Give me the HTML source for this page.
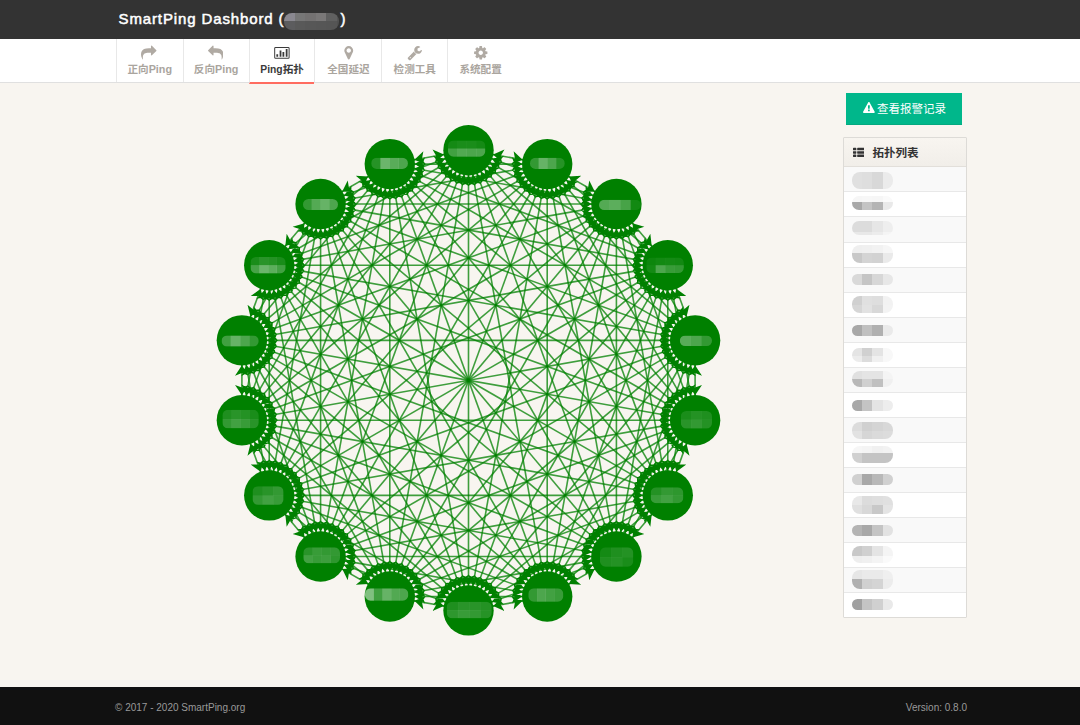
<!DOCTYPE html>
<html lang="zh-CN">
<head>
<meta charset="utf-8">
<title>SmartPing Dashbord</title>
<style>
*{box-sizing:border-box;margin:0;padding:0}
html,body{width:1080px;height:725px;overflow:hidden}
body{background:#f8f5f0;font-family:"Liberation Sans","Noto Sans CJK SC",sans-serif;color:#333;position:relative}
.header{position:absolute;left:0;top:0;width:1080px;height:39px;background:#333}
.header h1{position:absolute;left:118.500px;top:9px;font-size:15px;line-height:20px;font-weight:normal;-webkit-text-stroke:.5px #fff;color:#fff;white-space:nowrap;letter-spacing:.88px}
.header .sp{display:inline-block;width:56px}
.header .mask{position:absolute;left:284px;top:13px;width:55px;height:16.500px;border-radius:8px;overflow:hidden;font-size:0;line-height:0;filter:blur(.3px)}
.header .mask i{display:block;float:left;width:10.600px;height:8.250px}
.header .mask i:nth-child(6n){width:2px}
.nav{position:absolute;left:0;top:39px;width:1080px;height:44px;background:#fff;border-bottom:1px solid #e0e0e0}
.nav .tab{position:absolute;top:0;height:43px;border-left:1px solid #e8e8e8;text-align:center;color:#aaa59e;font-size:10.600px;font-weight:bold}
.nav .tab b{font-size:10.800px}
.nav .tab.active b{font-size:10.300px}
.nav .tab .ic{position:absolute;top:6.300px;width:15.500px;height:15.500px;fill:#b0aaa3}
.nav .tab span{position:absolute;left:0;right:0;top:23px;line-height:14px;white-space:nowrap}
.nav .tab.active{color:#3a3a3a;height:45px;border-bottom:2px solid #ff6c60}
.nav .tab.active .ic{fill:#3a3a3a;width:15.800px;height:15.800px;top:5.900px}
.graph{position:absolute;left:0;top:83px}
.btn{position:absolute;left:846px;top:93px;width:116px;height:32px;background:#00b78b;box-shadow:inset 0 -1px 0 #04a980;color:#fff;font-size:11.500px;line-height:32px;text-align:left;white-space:nowrap;padding-left:31px}
.btn svg{position:absolute;left:17px;top:9.300px;width:11.800px;height:11.800px;fill:#fff}
.panel{position:absolute;left:843px;top:137px;width:124px;height:481px;border:1px solid #dddbd7;border-radius:1px;background:#fff;overflow:hidden}
.panel .hd{height:29px;background:linear-gradient(#f8f5f0,#f1eee9);border-bottom:1px solid #e2dfda;position:relative;font-size:11.500px;font-weight:bold;color:#333}
.panel .hd svg{position:absolute;left:8.600px;top:8.900px;width:11.700px;height:11.700px;fill:#333}
.panel .hd span{position:absolute;left:28.500px;top:8px;line-height:14px}
.panel ul{list-style:none}
.panel li{height:25px;border-bottom:1px solid #e8e8e8;background:#fff;position:relative}
.panel li:nth-child(3){height:26px}
.panel li:nth-child(odd){background:#f9f9f9}
.panel li:last-child{border-bottom:0}
.blur{position:absolute;left:7.700px;width:41.500px;display:block;overflow:hidden;filter:blur(.35px)}
.blur i{position:absolute;display:block;width:10.700px}
.footer{position:absolute;left:0;top:687px;width:1080px;height:38px;background:#111;color:#999;font-size:10px}
.footer .l{position:absolute;left:115px;top:13.700px;line-height:14px}
.footer .r{position:absolute;right:113px;top:13.700px;line-height:14px}
</style>
</head>
<body>
<div class="header"><h1>SmartPing Dashbord (<span class="sp"></span>)</h1><div class="mask"><i style="background:#8a8890"></i><i style="background:#777"></i><i style="background:#747272"></i><i style="background:#7a7878"></i><i style="background:#606060"></i><i style="background:#555"></i><i style="background:#5c5c5e"></i><i style="background:#595959"></i><i style="background:#575757"></i><i style="background:#565656"></i><i style="background:#555"></i><i style="background:#505050"></i></div></div>
<div class="nav">
<div class="tab" style="left:116.0px;width:66.5px"><svg class="ic" viewBox="0 0 1792 1792" style="left:24.0px"><path d="M1792 640q0 26-19 45l-512 512q-19 19-45 19t-45-19-19-45v-256h-224q-98 0-175.500 6t-154 21.500-133 42.500-105.500 69.500-80 101-48.500 138.500-17.500 181q0 55 5 123 0 6 2.500 23.500t2.500 26.500q0 15-8.500 25t-23.500 10q-16 0-28-17-7-9-13-22t-13.500-30-10.500-24q-127-285-127-451 0-199 53-333 162-403 875-403h224v-256q0-26 19-45t45-19 45 19l512 512q19 19 19 45z"/></svg><span>正向<b>Ping</b></span></div>
<div class="tab" style="left:182.5px;width:66.3px"><svg class="ic" viewBox="0 0 1792 1792" style="left:24.2px"><path d="M1792 1120q0 166-127 451-3 7-10.500 24t-13.500 30-13 22q-12 17-28 17-15 0-23.500-10t-8.500-25q0-9 2.500-26.500t2.500-23.500q5-68 5-123 0-101-17.500-181t-48.500-138.500-80-101-105.500-69.500-133-42.500-154-21.500-175.500-6h-224v256q0 26-19 45t-45 19-45-19l-512-512q-19-19-19-45t19-45l512-512q19-19 45-19t45 19 19 45v256h224q713 0 875 403 53 134 53 333z"/></svg><span>反向<b>Ping</b></span></div>
<div class="tab active" style="left:248.8px;width:65.6px"><svg class="ic" viewBox="0 0 16 16" style="left:24.70px"><path d="M1.600 2h12.800a1.400 1.400 0 0 1 1.400 1.400v9.200a1.400 1.400 0 0 1-1.400 1.400H1.600a1.400 1.400 0 0 1-1.400-1.400V3.400A1.400 1.400 0 0 1 1.600 2zm0 1a.4.400 0 0 0-.4.400v9.200c0 .220.180.4.400.4h12.800a.4.400 0 0 0 .4-.4V3.400a.4.400 0 0 0-.4-.4zM2.400 9.300h1.800V12H2.400zM5.700 5.500h1.800V12H5.700zM8.600 7.200h1.800V12H8.600zM11.900 4h1.800v8h-1.800z" fill-rule="evenodd"/></svg><span><b>Ping</b>拓扑</span></div>
<div class="tab" style="left:314.4px;width:67.0px"><svg class="ic" viewBox="0 0 1792 1792" style="left:25.15px"><path d="M1152 640q0-106-75-181t-181-75-181 75-75 181 75 181 181 75 181-75 75-181zm256 0q0 109-33 179l-364 774q-16 33-47.500 52t-67.500 19-67.500-19-46.500-52l-365-774q-33-70-33-179 0-212 150-362t362-150 362 150 150 362z"/></svg><span>全国延迟</span></div>
<div class="tab" style="left:381.4px;width:65.8px"><svg class="ic" viewBox="0 0 1792 1792" style="left:24.65px"><path d="M448 1472q0-26-19-45t-45-19-45 19-19 45 19 45 45 19 45-19 19-45zm644-420l-682 682q-37 37-90 37-52 0-91-37l-106-108q-38-36-38-90 0-53 38-91l681-681q39 98 114.500 173.500t173.500 114.500zm634-435q0 39-23 106-47 134-164.500 217.500t-258.500 83.500q-185 0-316.500-131.500t-131.500-316.500 131.500-316.500 316.500-131.500q58 0 121.500 16.500t107.500 46.500q16 11 16 28t-16 28l-293 169v224l193 107q5-3 79-48.500t135.500-81 70.500-35.500q15 0 23.500 10t8.500 25z"/></svg><span>检测工具</span></div>
<div class="tab" style="left:447.2px;width:65.8px"><svg class="ic" viewBox="0 0 1792 1792" style="left:24.65px"><path d="M1152 896q0-106-75-181t-181-75-181 75-75 181 75 181 181 75 181-75 75-181zm512-109v222q0 12-8 23t-20 13l-185 28q-19 54-39 91 35 50 107 138 10 12 10 25t-9 23q-27 37-99 108t-94 71q-12 0-26-9l-138-108q-44 23-91 38-16 136-29 186-7 28-36 28h-222q-14 0-24.500-8.500t-11.500-21.500l-28-184q-49-16-90-37l-141 107q-10 9-25 9-14 0-25-11-126-114-165-168-7-10-7-23 0-12 8-23 15-21 51-66.500t54-70.500q-27-50-41-99l-183-27q-13-2-21-12.500t-8-23.500v-222q0-12 8-23t19-13l186-28q14-46 39-92-40-57-107-138-10-12-10-24 0-10 9-23 26-36 98.500-107.500t94.500-71.500q13 0 26 10l138 107q44-23 91-38 16-136 29-186 7-28 36-28h222q14 0 24.500 8.500t11.500 21.500l28 184q49 16 90 37l142-107q9-9 24-9 13 0 25 10 129 119 165 170 7 8 7 22 0 12-8 23-15 21-51 66.500t-54 70.500q26 50 41 98l183 28q13 2 21 12.500t8 23.500z"/></svg><span>系统配置</span></div>
</div>
<svg class="graph" width="1080" height="604" viewBox="0 83 1080 604">
<defs><filter id="bl" x="-20%" y="-40%" width="140%" height="180%"><feGaussianBlur stdDeviation="0.35"/></filter></defs>
<g>
<g fill="none" stroke="#008000" stroke-width="1.6" stroke-opacity="0.75"><path d="M686.55 443.75L676.32 471.86"/><path d="M682.6 441.91L628.91 534.92"/><path d="M679.03 439.41L563.27 577.37"/><path d="M675.95 436.33L487.65 594.33"/><path d="M673.45 432.76L411.45 584.02"/><path d="M671.61 428.81L344.09 548.02"/><path d="M670.48 424.6L293.85 491.01"/><path d="M670.1 420.26L266.9 420.26"/><path d="M670.48 415.92L266.52 344.68"/><path d="M671.61 411.71L292.72 273.8"/><path d="M673.45 407.76L342.25 216.53"/><path d="M675.95 404.19L408.95 180.15"/><path d="M679.03 401.11L484.57 169.35"/><path d="M682.6 398.61L559.7 185.73"/><path d="M686.55 396.76L624.96 227.53"/><path d="M690.76 395.64L672.11 289.87"/><path d="M695.1 395.26L695.1 365.34"/><path d="M651.7 514.5L632.48 537.42"/><path d="M648.62 511.42L566.35 580.45"/><path d="M646.12 507.85L490.15 597.9"/><path d="M644.28 503.9L413.29 587.97"/><path d="M643.15 499.69L345.21 552.23"/><path d="M642.77 495.35L294.23 495.35"/><path d="M643.15 491.01L266.52 424.6"/><path d="M644.28 486.8L265.39 348.89"/><path d="M646.12 482.85L290.88 277.75"/><path d="M648.62 479.28L339.75 220.1"/><path d="M651.7 476.2L405.87 183.23"/><path d="M655.27 473.7L481 171.85"/><path d="M659.22 471.86L555.75 187.57"/><path d="M663.43 470.73L620.75 228.65"/><path d="M667.77 470.35L667.77 290.25"/><path d="M672.11 470.73L690.76 364.96"/><path d="M594.75 569.07L568.85 584.02"/><path d="M592.91 565.12L491.99 601.85"/><path d="M591.79 560.91L414.42 592.18"/><path d="M591.41 556.57L345.59 556.57"/><path d="M591.79 552.23L293.85 499.69"/><path d="M592.91 548.02L265.39 428.81"/><path d="M594.75 544.07L263.55 352.84"/><path d="M597.25 540.5L288.38 281.32"/><path d="M600.34 537.42L336.66 223.18"/><path d="M603.91 534.92L402.3 185.73"/><path d="M607.85 533.07L477.05 173.69"/><path d="M612.06 531.95L551.54 188.7"/><path d="M616.41 531.57L616.41 229.03"/><path d="M620.75 531.95L663.43 289.87"/><path d="M624.96 533.07L686.55 363.84"/><path d="M522.58 600.86L493.12 606.06"/><path d="M522.2 596.52L414.8 596.52"/><path d="M522.58 592.18L345.21 560.91"/><path d="M523.71 587.97L292.72 503.9"/><path d="M525.55 584.02L263.55 432.76"/><path d="M528.05 580.45L261.05 356.41"/><path d="M531.13 577.37L285.3 284.4"/><path d="M534.7 574.87L333.09 225.68"/><path d="M538.65 573.03L398.35 187.57"/><path d="M542.86 571.9L472.84 174.82"/><path d="M547.2 571.52L547.2 189.08"/><path d="M551.54 571.9L612.06 228.65"/><path d="M555.75 573.03L659.22 288.74"/><path d="M559.7 574.87L682.6 361.99"/><path d="M443.88 606.06L414.42 600.86"/><path d="M445.01 601.85L344.09 565.12"/><path d="M446.85 597.9L290.88 507.85"/><path d="M449.35 594.33L261.05 436.33"/><path d="M452.43 591.25L257.97 359.49"/><path d="M456 588.75L281.73 286.9"/><path d="M459.95 586.91L329.15 227.53"/><path d="M464.16 585.78L394.14 188.7"/><path d="M468.5 585.4L468.5 175.2"/><path d="M472.84 585.78L542.86 188.7"/><path d="M477.05 586.91L607.85 227.53"/><path d="M481 588.75L655.27 286.9"/><path d="M484.57 591.25L679.03 359.49"/><path d="M368.15 584.02L342.25 569.07"/><path d="M370.65 580.45L288.38 511.42"/><path d="M373.73 577.37L257.97 439.41"/><path d="M377.3 574.87L254.4 361.99"/><path d="M381.25 573.03L277.78 288.74"/><path d="M385.46 571.9L324.94 228.65"/><path d="M389.8 571.52L389.8 189.08"/><path d="M394.14 571.9L464.16 174.82"/><path d="M398.35 573.03L538.65 187.57"/><path d="M402.3 574.87L603.91 225.68"/><path d="M405.87 577.37L651.7 284.4"/><path d="M408.95 580.45L675.95 356.41"/><path d="M304.52 537.42L285.3 514.5"/><path d="M308.09 534.92L254.4 441.91"/><path d="M312.04 533.07L250.45 363.84"/><path d="M316.25 531.95L273.57 289.87"/><path d="M320.59 531.57L320.59 229.03"/><path d="M324.94 531.95L385.46 188.7"/><path d="M329.15 533.07L459.95 173.69"/><path d="M333.09 534.92L534.7 185.73"/><path d="M336.66 537.42L600.34 223.18"/><path d="M339.75 540.5L648.62 281.32"/><path d="M342.25 544.07L673.45 352.84"/><path d="M260.68 471.86L250.45 443.75"/><path d="M264.89 470.73L246.24 364.96"/><path d="M269.23 470.35L269.23 290.25"/><path d="M273.57 470.73L316.25 228.65"/><path d="M277.78 471.86L381.25 187.57"/><path d="M281.73 473.7L456 171.85"/><path d="M285.3 476.2L531.13 183.23"/><path d="M288.38 479.28L597.25 220.1"/><path d="M290.88 482.85L646.12 277.75"/><path d="M292.72 486.8L671.61 348.89"/><path d="M241.9 395.26L241.9 365.34"/><path d="M246.24 395.64L264.89 289.87"/><path d="M250.45 396.76L312.04 227.53"/><path d="M254.4 398.61L377.3 185.73"/><path d="M257.97 401.11L452.43 169.35"/><path d="M261.05 404.19L528.05 180.15"/><path d="M263.55 407.76L594.75 216.53"/><path d="M265.39 411.71L644.28 273.8"/><path d="M266.52 415.92L670.48 344.68"/><path d="M250.45 316.85L260.68 288.74"/><path d="M254.4 318.69L308.09 225.68"/><path d="M257.97 321.19L373.73 183.23"/><path d="M261.05 324.27L449.35 166.27"/><path d="M263.55 327.84L525.55 176.58"/><path d="M265.39 331.79L592.91 212.58"/><path d="M266.52 336L643.15 269.59"/><path d="M266.9 340.34L670.1 340.34"/><path d="M285.3 246.1L304.52 223.18"/><path d="M288.38 249.18L370.65 180.15"/><path d="M290.88 252.75L446.85 162.7"/><path d="M292.72 256.7L523.71 172.63"/><path d="M293.85 260.91L591.79 208.37"/><path d="M294.23 265.25L642.77 265.25"/><path d="M293.85 269.59L670.48 336"/><path d="M342.25 191.53L368.15 176.58"/><path d="M344.09 195.48L445.01 158.75"/><path d="M345.21 199.69L522.58 168.42"/><path d="M345.59 204.03L591.41 204.03"/><path d="M345.21 208.37L643.15 260.91"/><path d="M344.09 212.58L671.61 331.79"/><path d="M414.42 159.74L443.88 154.54"/><path d="M414.8 164.08L522.2 164.08"/><path d="M414.42 168.42L591.79 199.69"/><path d="M413.29 172.63L644.28 256.7"/><path d="M411.45 176.58L673.45 327.84"/><path d="M493.12 154.54L522.58 159.74"/><path d="M491.99 158.75L592.91 195.48"/><path d="M490.15 162.7L646.12 252.75"/><path d="M487.65 166.27L675.95 324.27"/><path d="M568.85 176.58L594.75 191.53"/><path d="M566.35 180.15L648.62 249.18"/><path d="M563.27 183.23L679.03 321.19"/><path d="M632.48 223.18L651.7 246.1"/><path d="M628.91 225.68L682.6 318.69"/><path d="M676.32 288.74L686.55 316.85"/></g>
<path d="M686.55 443.75L676.58 451.08L683.91 451.01L689.48 455.78ZM676.32 471.86L686.3 464.53L678.97 464.6L673.39 459.83ZM682.6 441.91L671.51 447.39L678.74 448.6L683.4 454.26ZM628.91 534.92L640 529.43L632.77 528.23L628.11 522.56ZM679.03 439.41L667.15 442.88L674.07 445.33L677.67 451.71ZM563.27 577.37L575.15 573.9L568.23 571.45L564.63 565.07ZM675.95 436.33L663.65 437.69L670.04 441.29L672.48 448.21ZM487.65 594.33L499.96 592.97L493.57 589.36L491.13 582.45ZM673.45 432.76L661.1 431.96L666.76 436.62L667.97 443.85ZM411.45 584.02L423.81 584.82L418.14 580.16L416.94 572.93ZM671.61 428.81L659.58 425.88L664.35 431.45L664.28 438.78ZM344.09 548.02L356.11 550.95L351.35 545.37L351.42 538.04ZM670.48 424.6L659.15 419.62L662.88 425.94L661.53 433.15ZM293.85 491.01L305.18 495.98L301.46 489.67L302.8 482.46ZM670.1 420.26L659.8 413.39L662.38 420.26L659.8 427.12ZM266.9 420.26L277.2 427.12L274.62 420.26L277.2 413.39ZM670.48 415.92L661.53 407.36L662.88 414.57L659.15 420.89ZM266.52 344.68L275.47 353.24L274.12 346.03L277.85 339.71ZM671.61 411.71L664.28 401.73L664.35 409.06L659.58 414.64ZM292.72 273.8L300.05 283.78L299.98 276.44L304.75 270.87ZM673.45 407.76L667.97 396.66L666.76 403.89L661.1 408.55ZM342.25 216.53L347.73 227.63L348.94 220.4L354.6 215.74ZM675.95 404.19L672.48 392.31L670.04 399.22L663.65 402.83ZM408.95 180.15L412.43 192.03L414.87 185.11L421.26 181.51ZM679.03 401.11L677.67 388.8L674.07 395.19L667.15 397.63ZM484.57 169.35L485.93 181.66L489.54 175.27L496.45 172.83ZM682.6 398.61L683.4 386.25L678.74 391.92L671.51 393.12ZM559.7 185.73L558.9 198.08L563.56 192.42L570.8 191.21ZM686.55 396.76L689.48 384.74L683.91 389.51L676.58 389.43ZM624.96 227.53L622.03 239.55L627.6 234.78L634.93 234.86ZM690.76 395.64L695.74 384.3L689.42 388.03L682.21 386.69ZM672.11 289.87L667.14 301.21L673.46 297.48L680.66 298.82ZM695.1 395.26L701.97 384.96L695.1 387.53L688.24 384.96ZM695.1 365.34L688.24 375.64L695.1 373.07L701.97 375.64ZM651.7 514.5L639.82 517.98L646.74 520.42L650.34 526.81ZM632.48 537.42L644.36 533.94L637.44 531.5L633.84 525.11ZM648.62 511.42L636.32 512.78L642.7 516.39L645.14 523.3ZM566.35 580.45L578.65 579.09L572.27 575.49L569.83 568.57ZM646.12 507.85L633.77 507.05L639.43 511.71L640.64 518.95ZM490.15 597.9L502.5 598.7L496.84 594.04L495.64 586.8ZM644.28 503.9L632.25 500.97L637.02 506.54L636.95 513.88ZM413.29 587.97L425.32 590.9L420.55 585.33L420.62 578ZM643.15 499.69L631.82 494.72L635.54 501.03L634.2 508.24ZM345.21 552.23L356.55 557.2L352.82 550.88L354.17 543.67ZM642.77 495.35L632.47 488.48L635.05 495.35L632.47 502.22ZM294.23 495.35L304.53 502.22L301.95 495.35L304.53 488.48ZM643.15 491.01L634.2 482.46L635.54 489.67L631.82 495.98ZM266.52 424.6L275.47 433.15L274.12 425.94L277.85 419.62ZM644.28 486.8L636.95 476.82L637.02 484.16L632.25 489.73ZM265.39 348.89L272.72 358.87L272.65 351.54L277.42 345.96ZM646.12 482.85L640.64 471.75L639.43 478.99L633.77 483.65ZM290.88 277.75L296.36 288.85L297.57 281.61L303.23 276.95ZM648.62 479.28L645.14 467.4L642.7 474.31L636.32 477.92ZM339.75 220.1L343.22 231.98L345.66 225.07L352.05 221.46ZM651.7 476.2L650.34 463.89L646.74 470.28L639.82 472.72ZM405.87 183.23L407.23 195.53L410.84 189.15L417.75 186.7ZM655.27 473.7L656.07 461.35L651.41 467.01L644.18 468.21ZM481 171.85L480.2 184.2L484.86 178.54L492.1 177.34ZM659.22 471.86L662.15 459.83L656.58 464.6L649.25 464.53ZM555.75 187.57L552.82 199.6L558.39 194.83L565.72 194.9ZM663.43 470.73L668.41 459.39L662.09 463.12L654.88 461.78ZM620.75 228.65L615.77 239.99L622.09 236.26L629.3 237.6ZM667.77 470.35L674.64 460.05L667.77 462.62L660.91 460.05ZM667.77 290.25L660.91 300.55L667.77 297.97L674.64 300.55ZM672.11 470.73L680.66 461.78L673.46 463.12L667.14 459.39ZM690.76 364.96L682.21 373.91L689.42 372.57L695.74 376.3ZM594.75 569.07L582.4 568.27L588.06 572.93L589.27 580.16ZM568.85 584.02L581.2 584.82L575.54 580.16L574.34 572.93ZM592.91 565.12L580.89 562.19L585.65 567.76L585.58 575.09ZM491.99 601.85L504.02 604.78L499.25 599.21L499.32 591.87ZM591.79 560.91L580.45 555.93L584.18 562.25L582.83 569.46ZM414.42 592.18L425.76 597.16L422.03 590.84L423.37 583.63ZM591.41 556.57L581.11 549.7L583.68 556.57L581.11 563.43ZM345.59 556.57L355.89 563.43L353.32 556.57L355.89 549.7ZM591.79 552.23L582.83 543.67L584.18 550.88L580.45 557.2ZM293.85 499.69L302.8 508.24L301.46 501.03L305.18 494.72ZM592.91 548.02L585.58 538.04L585.65 545.37L580.89 550.95ZM265.39 428.81L272.72 438.78L272.65 431.45L277.42 425.88ZM594.75 544.07L589.27 532.97L588.06 540.2L582.4 544.86ZM263.55 352.84L269.03 363.94L270.24 356.71L275.9 352.05ZM597.25 540.5L593.78 528.62L591.34 535.53L584.95 539.14ZM288.38 281.32L291.86 293.2L294.3 286.29L300.68 282.68ZM600.34 537.42L598.98 525.11L595.37 531.5L588.45 533.94ZM336.66 223.18L338.02 235.49L341.63 229.1L348.55 226.66ZM603.91 534.92L604.7 522.56L600.04 528.23L592.81 529.43ZM402.3 185.73L401.5 198.08L406.16 192.42L413.4 191.21ZM607.85 533.07L610.78 521.05L605.21 525.82L597.88 525.74ZM477.05 173.69L474.12 185.72L479.69 180.95L487.03 181.02ZM612.06 531.95L617.04 520.61L610.72 524.34L603.51 523ZM551.54 188.7L546.57 200.03L552.88 196.3L560.09 197.65ZM616.41 531.57L623.27 521.27L616.41 523.84L609.54 521.27ZM616.41 229.03L609.54 239.33L616.41 236.76L623.27 239.33ZM620.75 531.95L629.3 523L622.09 524.34L615.77 520.61ZM663.43 289.87L654.88 298.82L662.09 297.48L668.41 301.21ZM624.96 533.07L634.93 525.74L627.6 525.82L622.03 521.05ZM686.55 363.84L676.58 371.17L683.91 371.09L689.48 375.86ZM522.58 600.86L511.24 595.89L514.97 602.21L513.63 609.42ZM493.12 606.06L504.46 611.03L500.73 604.72L502.07 597.51ZM522.2 596.52L511.9 589.66L514.47 596.52L511.9 603.39ZM414.8 596.52L425.1 603.39L422.53 596.52L425.1 589.66ZM522.58 592.18L513.63 583.63L514.97 590.84L511.24 597.16ZM345.21 560.91L354.17 569.46L352.82 562.25L356.55 555.93ZM523.71 587.97L516.38 578L516.45 585.33L511.68 590.9ZM292.72 503.9L300.05 513.88L299.98 506.54L304.75 500.97ZM525.55 584.02L520.06 572.93L518.86 580.16L513.19 584.82ZM263.55 432.76L269.03 443.85L270.24 436.62L275.9 431.96ZM528.05 580.45L524.57 568.57L522.13 575.49L515.74 579.09ZM261.05 356.41L264.52 368.29L266.96 361.38L273.35 357.77ZM531.13 577.37L529.77 565.07L526.16 571.45L519.25 573.9ZM285.3 284.4L286.66 296.71L290.26 290.32L297.18 287.88ZM534.7 574.87L535.5 562.52L530.84 568.18L523.6 569.39ZM333.09 225.68L332.3 238.04L336.96 232.37L344.19 231.17ZM538.65 573.03L541.58 561L536.01 565.77L528.67 565.7ZM398.35 187.57L395.42 199.6L400.99 194.83L408.33 194.9ZM542.86 571.9L547.83 560.57L541.52 564.3L534.31 562.95ZM472.84 174.82L467.87 186.16L474.18 182.43L481.39 183.77ZM547.2 571.52L554.07 561.22L547.2 563.8L540.33 561.22ZM547.2 189.08L540.33 199.38L547.2 196.8L554.07 199.38ZM551.54 571.9L560.09 562.95L552.88 564.3L546.57 560.57ZM612.06 228.65L603.51 237.6L610.72 236.26L617.04 239.99ZM555.75 573.03L565.72 565.7L558.39 565.77L552.82 561ZM659.22 288.74L649.25 296.07L656.58 296L662.15 300.77ZM559.7 574.87L570.8 569.39L563.56 568.18L558.9 562.52ZM682.6 361.99L671.51 367.48L678.74 368.68L683.4 374.35ZM443.88 606.06L434.93 597.51L436.27 604.72L432.54 611.03ZM414.42 600.86L423.37 609.42L422.03 602.21L425.76 595.89ZM445.01 601.85L437.68 591.87L437.75 599.21L432.98 604.78ZM344.09 565.12L351.42 575.09L351.35 567.76L356.11 562.19ZM446.85 597.9L441.36 586.8L440.16 594.04L434.5 598.7ZM290.88 507.85L296.36 518.95L297.57 511.71L303.23 507.05ZM449.35 594.33L445.87 582.45L443.43 589.36L437.04 592.97ZM261.05 436.33L264.52 448.21L266.96 441.29L273.35 437.69ZM452.43 591.25L451.07 578.94L447.46 585.33L440.55 587.77ZM257.97 359.49L259.33 371.8L262.93 365.41L269.85 362.97ZM456 588.75L456.8 576.4L452.14 582.06L444.9 583.26ZM281.73 286.9L280.93 299.25L285.59 293.59L292.82 292.39ZM459.95 586.91L462.88 574.88L457.31 579.65L449.97 579.58ZM329.15 227.53L326.22 239.55L331.79 234.78L339.12 234.86ZM464.16 585.78L469.13 574.44L462.82 578.17L455.61 576.83ZM394.14 188.7L389.17 200.03L395.48 196.3L402.69 197.65ZM468.5 585.4L475.37 575.1L468.5 577.67L461.63 575.1ZM468.5 175.2L461.63 185.5L468.5 182.93L475.37 185.5ZM472.84 585.78L481.39 576.83L474.18 578.17L467.87 574.44ZM542.86 188.7L534.31 197.65L541.52 196.3L547.83 200.03ZM477.05 586.91L487.03 579.58L479.69 579.65L474.12 574.88ZM607.85 227.53L597.88 234.86L605.21 234.78L610.78 239.55ZM481 588.75L492.1 583.26L484.86 582.06L480.2 576.4ZM655.27 286.9L644.18 292.39L651.41 293.59L656.07 299.25ZM484.57 591.25L496.45 587.77L489.54 585.33L485.93 578.94ZM679.03 359.49L667.15 362.97L674.07 365.41L677.67 371.8ZM368.15 584.02L362.66 572.93L361.46 580.16L355.8 584.82ZM342.25 569.07L347.73 580.16L348.94 572.93L354.6 568.27ZM370.65 580.45L367.17 568.57L364.73 575.49L358.35 579.09ZM288.38 511.42L291.86 523.3L294.3 516.39L300.68 512.78ZM373.73 577.37L372.37 565.07L368.77 571.45L361.85 573.9ZM257.97 439.41L259.33 451.71L262.93 445.33L269.85 442.88ZM377.3 574.87L378.1 562.52L373.44 568.18L366.2 569.39ZM254.4 361.99L253.6 374.35L258.26 368.68L265.49 367.48ZM381.25 573.03L384.18 561L378.61 565.77L371.28 565.7ZM277.78 288.74L274.85 300.77L280.42 296L287.75 296.07ZM385.46 571.9L390.43 560.57L384.12 564.3L376.91 562.95ZM324.94 228.65L319.96 239.99L326.28 236.26L333.49 237.6ZM389.8 571.52L396.67 561.22L389.8 563.8L382.93 561.22ZM389.8 189.08L382.93 199.38L389.8 196.8L396.67 199.38ZM394.14 571.9L402.69 562.95L395.48 564.3L389.17 560.57ZM464.16 174.82L455.61 183.77L462.82 182.43L469.13 186.16ZM398.35 573.03L408.33 565.7L400.99 565.77L395.42 561ZM538.65 187.57L528.67 194.9L536.01 194.83L541.58 199.6ZM402.3 574.87L413.4 569.39L406.16 568.18L401.5 562.52ZM603.91 225.68L592.81 231.17L600.04 232.37L604.7 238.04ZM405.87 577.37L417.75 573.9L410.84 571.45L407.23 565.07ZM651.7 284.4L639.82 287.88L646.74 290.32L650.34 296.71ZM408.95 580.45L421.26 579.09L414.87 575.49L412.43 568.57ZM675.95 356.41L663.65 357.77L670.04 361.38L672.48 368.29ZM304.52 537.42L303.16 525.11L299.56 531.5L292.64 533.94ZM285.3 514.5L286.66 526.81L290.26 520.42L297.18 517.98ZM308.09 534.92L308.89 522.56L304.23 528.23L297 529.43ZM254.4 441.91L253.6 454.26L258.26 448.6L265.49 447.39ZM312.04 533.07L314.97 521.05L309.4 525.82L302.07 525.74ZM250.45 363.84L247.52 375.86L253.09 371.09L260.42 371.17ZM316.25 531.95L321.23 520.61L314.91 524.34L307.7 523ZM273.57 289.87L268.59 301.21L274.91 297.48L282.12 298.82ZM320.59 531.57L327.46 521.27L320.59 523.84L313.73 521.27ZM320.59 229.03L313.73 239.33L320.59 236.76L327.46 239.33ZM324.94 531.95L333.49 523L326.28 524.34L319.96 520.61ZM385.46 188.7L376.91 197.65L384.12 196.3L390.43 200.03ZM329.15 533.07L339.12 525.74L331.79 525.82L326.22 521.05ZM459.95 173.69L449.97 181.02L457.31 180.95L462.88 185.72ZM333.09 534.92L344.19 529.43L336.96 528.23L332.3 522.56ZM534.7 185.73L523.6 191.21L530.84 192.42L535.5 198.08ZM336.66 537.42L348.55 533.94L341.63 531.5L338.02 525.11ZM600.34 223.18L588.45 226.66L595.37 229.1L598.98 235.49ZM339.75 540.5L352.05 539.14L345.66 535.53L343.22 528.62ZM648.62 281.32L636.32 282.68L642.7 286.29L645.14 293.2ZM342.25 544.07L354.6 544.86L348.94 540.2L347.73 532.97ZM673.45 352.84L661.1 352.05L666.76 356.71L667.97 363.94ZM260.68 471.86L263.61 459.83L258.03 464.6L250.7 464.53ZM250.45 443.75L247.52 455.78L253.09 451.01L260.42 451.08ZM264.89 470.73L269.86 459.39L263.54 463.12L256.34 461.78ZM246.24 364.96L241.26 376.3L247.58 372.57L254.79 373.91ZM269.23 470.35L276.09 460.05L269.23 462.62L262.36 460.05ZM269.23 290.25L262.36 300.55L269.23 297.98L276.09 300.55ZM273.57 470.73L282.12 461.78L274.91 463.12L268.59 459.39ZM316.25 228.65L307.7 237.6L314.91 236.26L321.23 239.99ZM277.78 471.86L287.75 464.53L280.42 464.6L274.85 459.83ZM381.25 187.57L371.28 194.9L378.61 194.83L384.18 199.6ZM281.73 473.7L292.82 468.21L285.59 467.01L280.93 461.35ZM456 171.85L444.9 177.34L452.14 178.54L456.8 184.2ZM285.3 476.2L297.18 472.72L290.26 470.28L286.66 463.89ZM531.13 183.23L519.25 186.7L526.16 189.15L529.77 195.53ZM288.38 479.28L300.68 477.92L294.3 474.31L291.86 467.4ZM597.25 220.1L584.95 221.46L591.34 225.07L593.78 231.98ZM290.88 482.85L303.23 483.65L297.57 478.99L296.36 471.75ZM646.12 277.75L633.77 276.95L639.43 281.61L640.64 288.85ZM292.72 486.8L304.75 489.73L299.98 484.16L300.05 476.82ZM671.61 348.89L659.58 345.96L664.35 351.54L664.28 358.87ZM241.9 395.26L248.76 384.96L241.9 387.53L235.03 384.96ZM241.9 365.34L235.03 375.64L241.9 373.07L248.76 375.64ZM246.24 395.64L254.79 386.69L247.58 388.03L241.26 384.3ZM264.89 289.87L256.34 298.82L263.54 297.48L269.86 301.21ZM250.45 396.76L260.42 389.43L253.09 389.51L247.52 384.74ZM312.04 227.53L302.07 234.86L309.4 234.78L314.97 239.55ZM254.4 398.61L265.49 393.12L258.26 391.92L253.6 386.25ZM377.3 185.73L366.2 191.21L373.44 192.42L378.1 198.08ZM257.97 401.11L269.85 397.63L262.93 395.19L259.33 388.8ZM452.43 169.35L440.55 172.83L447.46 175.27L451.07 181.66ZM261.05 404.19L273.35 402.83L266.96 399.22L264.52 392.31ZM528.05 180.15L515.74 181.51L522.13 185.11L524.57 192.03ZM263.55 407.76L275.9 408.55L270.24 403.89L269.03 396.66ZM594.75 216.53L582.4 215.74L588.06 220.4L589.27 227.63ZM265.39 411.71L277.42 414.64L272.65 409.06L272.72 401.73ZM644.28 273.8L632.25 270.87L637.02 276.44L636.95 283.78ZM266.52 415.92L277.85 420.89L274.12 414.57L275.47 407.36ZM670.48 344.68L659.15 339.71L662.88 346.03L661.53 353.24ZM250.45 316.85L260.42 309.52L253.09 309.59L247.52 304.82ZM260.68 288.74L250.7 296.07L258.03 296L263.61 300.77ZM254.4 318.69L265.49 313.21L258.26 312L253.6 306.34ZM308.09 225.68L297 231.17L304.23 232.37L308.89 238.04ZM257.97 321.19L269.85 317.72L262.93 315.27L259.33 308.89ZM373.73 183.23L361.85 186.7L368.77 189.15L372.37 195.53ZM261.05 324.27L273.35 322.91L266.96 319.31L264.52 312.39ZM449.35 166.27L437.04 167.63L443.43 171.24L445.87 178.15ZM263.55 327.84L275.9 328.64L270.24 323.98L269.03 316.75ZM525.55 176.58L513.19 175.78L518.86 180.44L520.06 187.67ZM265.39 331.79L277.42 334.72L272.65 329.15L272.72 321.82ZM592.91 212.58L580.89 209.65L585.65 215.23L585.58 222.56ZM266.52 336L277.85 340.98L274.12 334.66L275.47 327.45ZM643.15 269.59L631.82 264.62L635.54 270.93L634.2 278.14ZM266.9 340.34L277.2 347.21L274.62 340.34L277.2 333.48ZM670.1 340.34L659.8 333.48L662.38 340.34L659.8 347.21ZM285.3 246.1L297.18 242.62L290.26 240.18L286.66 233.79ZM304.52 223.18L292.64 226.66L299.56 229.1L303.16 235.49ZM288.38 249.18L300.68 247.82L294.3 244.21L291.86 237.3ZM370.65 180.15L358.35 181.51L364.73 185.11L367.17 192.03ZM290.88 252.75L303.23 253.55L297.57 248.89L296.36 241.65ZM446.85 162.7L434.5 161.9L440.16 166.56L441.36 173.8ZM292.72 256.7L304.75 259.63L299.98 254.06L300.05 246.72ZM523.71 172.63L511.68 169.7L516.45 175.27L516.38 182.6ZM293.85 260.91L305.18 265.88L301.46 259.57L302.8 252.36ZM591.79 208.37L580.45 203.4L584.18 209.72L582.83 216.93ZM294.23 265.25L304.53 272.12L301.95 265.25L304.53 258.38ZM642.77 265.25L632.47 258.38L635.05 265.25L632.47 272.12ZM293.85 269.59L302.8 278.14L301.46 270.93L305.18 264.62ZM670.48 336L661.53 327.45L662.88 334.66L659.15 340.98ZM342.25 191.53L354.6 192.33L348.94 187.67L347.73 180.44ZM368.15 176.58L355.8 175.78L361.46 180.44L362.66 187.67ZM344.09 195.48L356.11 198.41L351.35 192.84L351.42 185.51ZM445.01 158.75L432.98 155.82L437.75 161.39L437.68 168.73ZM345.21 199.69L356.55 204.67L352.82 198.35L354.17 191.14ZM522.58 168.42L511.24 163.44L514.97 169.76L513.63 176.97ZM345.59 204.03L355.89 210.9L353.32 204.03L355.89 197.17ZM591.41 204.03L581.11 197.17L583.68 204.03L581.11 210.9ZM345.21 208.37L354.17 216.93L352.82 209.72L356.55 203.4ZM643.15 260.91L634.2 252.36L635.54 259.57L631.82 265.88ZM344.09 212.58L351.42 222.56L351.35 215.23L356.11 209.65ZM671.61 331.79L664.28 321.82L664.35 329.15L659.58 334.72ZM414.42 159.74L425.76 164.71L422.03 158.39L423.37 151.18ZM443.88 154.54L432.54 149.57L436.27 155.88L434.93 163.09ZM414.8 164.08L425.1 170.94L422.53 164.08L425.1 157.21ZM522.2 164.08L511.9 157.21L514.47 164.08L511.9 170.94ZM414.42 168.42L423.37 176.97L422.03 169.76L425.76 163.44ZM591.79 199.69L582.83 191.14L584.18 198.35L580.45 204.67ZM413.29 172.63L420.62 182.6L420.55 175.27L425.32 169.7ZM644.28 256.7L636.95 246.72L637.02 254.06L632.25 259.63ZM411.45 176.58L416.94 187.67L418.14 180.44L423.81 175.78ZM673.45 327.84L667.97 316.75L666.76 323.98L661.1 328.64ZM493.12 154.54L502.07 163.09L500.73 155.88L504.46 149.57ZM522.58 159.74L513.63 151.18L514.97 158.39L511.24 164.71ZM491.99 158.75L499.32 168.73L499.25 161.39L504.02 155.82ZM592.91 195.48L585.58 185.51L585.65 192.84L580.89 198.41ZM490.15 162.7L495.64 173.8L496.84 166.56L502.5 161.9ZM646.12 252.75L640.64 241.65L639.43 248.89L633.77 253.55ZM487.65 166.27L491.13 178.15L493.57 171.24L499.96 167.63ZM675.95 324.27L672.48 312.39L670.04 319.31L663.65 322.91ZM568.85 176.58L574.34 187.67L575.54 180.44L581.2 175.78ZM594.75 191.53L589.27 180.44L588.06 187.67L582.4 192.33ZM566.35 180.15L569.83 192.03L572.27 185.11L578.65 181.51ZM648.62 249.18L645.14 237.3L642.7 244.21L636.32 247.82ZM563.27 183.23L564.63 195.53L568.23 189.15L575.15 186.7ZM679.03 321.19L677.67 308.89L674.07 315.27L667.15 317.72ZM632.48 223.18L633.84 235.49L637.44 229.1L644.36 226.66ZM651.7 246.1L650.34 233.79L646.74 240.18L639.82 242.62ZM628.91 225.68L628.11 238.04L632.77 232.37L640 231.17ZM682.6 318.69L683.4 306.34L678.74 312L671.51 313.21ZM676.32 288.74L673.39 300.77L678.97 296L686.3 296.07ZM686.55 316.85L689.48 304.82L683.91 309.59L676.58 309.52Z" fill="#008000"/>
<g fill="#008000" fill-opacity="0.9"><circle cx="686.55" cy="443.75" r="0.9"/><circle cx="676.32" cy="471.86" r="0.9"/><circle cx="682.6" cy="441.91" r="0.9"/><circle cx="628.91" cy="534.92" r="0.9"/><circle cx="679.03" cy="439.41" r="0.9"/><circle cx="563.27" cy="577.37" r="0.9"/><circle cx="675.95" cy="436.33" r="0.9"/><circle cx="487.65" cy="594.33" r="0.9"/><circle cx="673.45" cy="432.76" r="0.9"/><circle cx="411.45" cy="584.02" r="0.9"/><circle cx="671.61" cy="428.81" r="0.9"/><circle cx="344.09" cy="548.02" r="0.9"/><circle cx="670.48" cy="424.6" r="0.9"/><circle cx="293.85" cy="491.01" r="0.9"/><circle cx="670.1" cy="420.26" r="0.9"/><circle cx="266.9" cy="420.26" r="0.9"/><circle cx="670.48" cy="415.92" r="0.9"/><circle cx="266.52" cy="344.68" r="0.9"/><circle cx="671.61" cy="411.71" r="0.9"/><circle cx="292.72" cy="273.8" r="0.9"/><circle cx="673.45" cy="407.76" r="0.9"/><circle cx="342.25" cy="216.53" r="0.9"/><circle cx="675.95" cy="404.19" r="0.9"/><circle cx="408.95" cy="180.15" r="0.9"/><circle cx="679.03" cy="401.11" r="0.9"/><circle cx="484.57" cy="169.35" r="0.9"/><circle cx="682.6" cy="398.61" r="0.9"/><circle cx="559.7" cy="185.73" r="0.9"/><circle cx="686.55" cy="396.76" r="0.9"/><circle cx="624.96" cy="227.53" r="0.9"/><circle cx="690.76" cy="395.64" r="0.9"/><circle cx="672.11" cy="289.87" r="0.9"/><circle cx="695.1" cy="395.26" r="0.9"/><circle cx="695.1" cy="365.34" r="0.9"/><circle cx="651.7" cy="514.5" r="0.9"/><circle cx="632.48" cy="537.42" r="0.9"/><circle cx="648.62" cy="511.42" r="0.9"/><circle cx="566.35" cy="580.45" r="0.9"/><circle cx="646.12" cy="507.85" r="0.9"/><circle cx="490.15" cy="597.9" r="0.9"/><circle cx="644.28" cy="503.9" r="0.9"/><circle cx="413.29" cy="587.97" r="0.9"/><circle cx="643.15" cy="499.69" r="0.9"/><circle cx="345.21" cy="552.23" r="0.9"/><circle cx="642.77" cy="495.35" r="0.9"/><circle cx="294.23" cy="495.35" r="0.9"/><circle cx="643.15" cy="491.01" r="0.9"/><circle cx="266.52" cy="424.6" r="0.9"/><circle cx="644.28" cy="486.8" r="0.9"/><circle cx="265.39" cy="348.89" r="0.9"/><circle cx="646.12" cy="482.85" r="0.9"/><circle cx="290.88" cy="277.75" r="0.9"/><circle cx="648.62" cy="479.28" r="0.9"/><circle cx="339.75" cy="220.1" r="0.9"/><circle cx="651.7" cy="476.2" r="0.9"/><circle cx="405.87" cy="183.23" r="0.9"/><circle cx="655.27" cy="473.7" r="0.9"/><circle cx="481" cy="171.85" r="0.9"/><circle cx="659.22" cy="471.86" r="0.9"/><circle cx="555.75" cy="187.57" r="0.9"/><circle cx="663.43" cy="470.73" r="0.9"/><circle cx="620.75" cy="228.65" r="0.9"/><circle cx="667.77" cy="470.35" r="0.9"/><circle cx="667.77" cy="290.25" r="0.9"/><circle cx="672.11" cy="470.73" r="0.9"/><circle cx="690.76" cy="364.96" r="0.9"/><circle cx="594.75" cy="569.07" r="0.9"/><circle cx="568.85" cy="584.02" r="0.9"/><circle cx="592.91" cy="565.12" r="0.9"/><circle cx="491.99" cy="601.85" r="0.9"/><circle cx="591.79" cy="560.91" r="0.9"/><circle cx="414.42" cy="592.18" r="0.9"/><circle cx="591.41" cy="556.57" r="0.9"/><circle cx="345.59" cy="556.57" r="0.9"/><circle cx="591.79" cy="552.23" r="0.9"/><circle cx="293.85" cy="499.69" r="0.9"/><circle cx="592.91" cy="548.02" r="0.9"/><circle cx="265.39" cy="428.81" r="0.9"/><circle cx="594.75" cy="544.07" r="0.9"/><circle cx="263.55" cy="352.84" r="0.9"/><circle cx="597.25" cy="540.5" r="0.9"/><circle cx="288.38" cy="281.32" r="0.9"/><circle cx="600.34" cy="537.42" r="0.9"/><circle cx="336.66" cy="223.18" r="0.9"/><circle cx="603.91" cy="534.92" r="0.9"/><circle cx="402.3" cy="185.73" r="0.9"/><circle cx="607.85" cy="533.07" r="0.9"/><circle cx="477.05" cy="173.69" r="0.9"/><circle cx="612.06" cy="531.95" r="0.9"/><circle cx="551.54" cy="188.7" r="0.9"/><circle cx="616.41" cy="531.57" r="0.9"/><circle cx="616.41" cy="229.03" r="0.9"/><circle cx="620.75" cy="531.95" r="0.9"/><circle cx="663.43" cy="289.87" r="0.9"/><circle cx="624.96" cy="533.07" r="0.9"/><circle cx="686.55" cy="363.84" r="0.9"/><circle cx="522.58" cy="600.86" r="0.9"/><circle cx="493.12" cy="606.06" r="0.9"/><circle cx="522.2" cy="596.52" r="0.9"/><circle cx="414.8" cy="596.52" r="0.9"/><circle cx="522.58" cy="592.18" r="0.9"/><circle cx="345.21" cy="560.91" r="0.9"/><circle cx="523.71" cy="587.97" r="0.9"/><circle cx="292.72" cy="503.9" r="0.9"/><circle cx="525.55" cy="584.02" r="0.9"/><circle cx="263.55" cy="432.76" r="0.9"/><circle cx="528.05" cy="580.45" r="0.9"/><circle cx="261.05" cy="356.41" r="0.9"/><circle cx="531.13" cy="577.37" r="0.9"/><circle cx="285.3" cy="284.4" r="0.9"/><circle cx="534.7" cy="574.87" r="0.9"/><circle cx="333.09" cy="225.68" r="0.9"/><circle cx="538.65" cy="573.03" r="0.9"/><circle cx="398.35" cy="187.57" r="0.9"/><circle cx="542.86" cy="571.9" r="0.9"/><circle cx="472.84" cy="174.82" r="0.9"/><circle cx="547.2" cy="571.52" r="0.9"/><circle cx="547.2" cy="189.08" r="0.9"/><circle cx="551.54" cy="571.9" r="0.9"/><circle cx="612.06" cy="228.65" r="0.9"/><circle cx="555.75" cy="573.03" r="0.9"/><circle cx="659.22" cy="288.74" r="0.9"/><circle cx="559.7" cy="574.87" r="0.9"/><circle cx="682.6" cy="361.99" r="0.9"/><circle cx="443.88" cy="606.06" r="0.9"/><circle cx="414.42" cy="600.86" r="0.9"/><circle cx="445.01" cy="601.85" r="0.9"/><circle cx="344.09" cy="565.12" r="0.9"/><circle cx="446.85" cy="597.9" r="0.9"/><circle cx="290.88" cy="507.85" r="0.9"/><circle cx="449.35" cy="594.33" r="0.9"/><circle cx="261.05" cy="436.33" r="0.9"/><circle cx="452.43" cy="591.25" r="0.9"/><circle cx="257.97" cy="359.49" r="0.9"/><circle cx="456" cy="588.75" r="0.9"/><circle cx="281.73" cy="286.9" r="0.9"/><circle cx="459.95" cy="586.91" r="0.9"/><circle cx="329.15" cy="227.53" r="0.9"/><circle cx="464.16" cy="585.78" r="0.9"/><circle cx="394.14" cy="188.7" r="0.9"/><circle cx="468.5" cy="585.4" r="0.9"/><circle cx="468.5" cy="175.2" r="0.9"/><circle cx="472.84" cy="585.78" r="0.9"/><circle cx="542.86" cy="188.7" r="0.9"/><circle cx="477.05" cy="586.91" r="0.9"/><circle cx="607.85" cy="227.53" r="0.9"/><circle cx="481" cy="588.75" r="0.9"/><circle cx="655.27" cy="286.9" r="0.9"/><circle cx="484.57" cy="591.25" r="0.9"/><circle cx="679.03" cy="359.49" r="0.9"/><circle cx="368.15" cy="584.02" r="0.9"/><circle cx="342.25" cy="569.07" r="0.9"/><circle cx="370.65" cy="580.45" r="0.9"/><circle cx="288.38" cy="511.42" r="0.9"/><circle cx="373.73" cy="577.37" r="0.9"/><circle cx="257.97" cy="439.41" r="0.9"/><circle cx="377.3" cy="574.87" r="0.9"/><circle cx="254.4" cy="361.99" r="0.9"/><circle cx="381.25" cy="573.03" r="0.9"/><circle cx="277.78" cy="288.74" r="0.9"/><circle cx="385.46" cy="571.9" r="0.9"/><circle cx="324.94" cy="228.65" r="0.9"/><circle cx="389.8" cy="571.52" r="0.9"/><circle cx="389.8" cy="189.08" r="0.9"/><circle cx="394.14" cy="571.9" r="0.9"/><circle cx="464.16" cy="174.82" r="0.9"/><circle cx="398.35" cy="573.03" r="0.9"/><circle cx="538.65" cy="187.57" r="0.9"/><circle cx="402.3" cy="574.87" r="0.9"/><circle cx="603.91" cy="225.68" r="0.9"/><circle cx="405.87" cy="577.37" r="0.9"/><circle cx="651.7" cy="284.4" r="0.9"/><circle cx="408.95" cy="580.45" r="0.9"/><circle cx="675.95" cy="356.41" r="0.9"/><circle cx="304.52" cy="537.42" r="0.9"/><circle cx="285.3" cy="514.5" r="0.9"/><circle cx="308.09" cy="534.92" r="0.9"/><circle cx="254.4" cy="441.91" r="0.9"/><circle cx="312.04" cy="533.07" r="0.9"/><circle cx="250.45" cy="363.84" r="0.9"/><circle cx="316.25" cy="531.95" r="0.9"/><circle cx="273.57" cy="289.87" r="0.9"/><circle cx="320.59" cy="531.57" r="0.9"/><circle cx="320.59" cy="229.03" r="0.9"/><circle cx="324.94" cy="531.95" r="0.9"/><circle cx="385.46" cy="188.7" r="0.9"/><circle cx="329.15" cy="533.07" r="0.9"/><circle cx="459.95" cy="173.69" r="0.9"/><circle cx="333.09" cy="534.92" r="0.9"/><circle cx="534.7" cy="185.73" r="0.9"/><circle cx="336.66" cy="537.42" r="0.9"/><circle cx="600.34" cy="223.18" r="0.9"/><circle cx="339.75" cy="540.5" r="0.9"/><circle cx="648.62" cy="281.32" r="0.9"/><circle cx="342.25" cy="544.07" r="0.9"/><circle cx="673.45" cy="352.84" r="0.9"/><circle cx="260.68" cy="471.86" r="0.9"/><circle cx="250.45" cy="443.75" r="0.9"/><circle cx="264.89" cy="470.73" r="0.9"/><circle cx="246.24" cy="364.96" r="0.9"/><circle cx="269.23" cy="470.35" r="0.9"/><circle cx="269.23" cy="290.25" r="0.9"/><circle cx="273.57" cy="470.73" r="0.9"/><circle cx="316.25" cy="228.65" r="0.9"/><circle cx="277.78" cy="471.86" r="0.9"/><circle cx="381.25" cy="187.57" r="0.9"/><circle cx="281.73" cy="473.7" r="0.9"/><circle cx="456" cy="171.85" r="0.9"/><circle cx="285.3" cy="476.2" r="0.9"/><circle cx="531.13" cy="183.23" r="0.9"/><circle cx="288.38" cy="479.28" r="0.9"/><circle cx="597.25" cy="220.1" r="0.9"/><circle cx="290.88" cy="482.85" r="0.9"/><circle cx="646.12" cy="277.75" r="0.9"/><circle cx="292.72" cy="486.8" r="0.9"/><circle cx="671.61" cy="348.89" r="0.9"/><circle cx="241.9" cy="395.26" r="0.9"/><circle cx="241.9" cy="365.34" r="0.9"/><circle cx="246.24" cy="395.64" r="0.9"/><circle cx="264.89" cy="289.87" r="0.9"/><circle cx="250.45" cy="396.76" r="0.9"/><circle cx="312.04" cy="227.53" r="0.9"/><circle cx="254.4" cy="398.61" r="0.9"/><circle cx="377.3" cy="185.73" r="0.9"/><circle cx="257.97" cy="401.11" r="0.9"/><circle cx="452.43" cy="169.35" r="0.9"/><circle cx="261.05" cy="404.19" r="0.9"/><circle cx="528.05" cy="180.15" r="0.9"/><circle cx="263.55" cy="407.76" r="0.9"/><circle cx="594.75" cy="216.53" r="0.9"/><circle cx="265.39" cy="411.71" r="0.9"/><circle cx="644.28" cy="273.8" r="0.9"/><circle cx="266.52" cy="415.92" r="0.9"/><circle cx="670.48" cy="344.68" r="0.9"/><circle cx="250.45" cy="316.85" r="0.9"/><circle cx="260.68" cy="288.74" r="0.9"/><circle cx="254.4" cy="318.69" r="0.9"/><circle cx="308.09" cy="225.68" r="0.9"/><circle cx="257.97" cy="321.19" r="0.9"/><circle cx="373.73" cy="183.23" r="0.9"/><circle cx="261.05" cy="324.27" r="0.9"/><circle cx="449.35" cy="166.27" r="0.9"/><circle cx="263.55" cy="327.84" r="0.9"/><circle cx="525.55" cy="176.58" r="0.9"/><circle cx="265.39" cy="331.79" r="0.9"/><circle cx="592.91" cy="212.58" r="0.9"/><circle cx="266.52" cy="336" r="0.9"/><circle cx="643.15" cy="269.59" r="0.9"/><circle cx="266.9" cy="340.34" r="0.9"/><circle cx="670.1" cy="340.34" r="0.9"/><circle cx="285.3" cy="246.1" r="0.9"/><circle cx="304.52" cy="223.18" r="0.9"/><circle cx="288.38" cy="249.18" r="0.9"/><circle cx="370.65" cy="180.15" r="0.9"/><circle cx="290.88" cy="252.75" r="0.9"/><circle cx="446.85" cy="162.7" r="0.9"/><circle cx="292.72" cy="256.7" r="0.9"/><circle cx="523.71" cy="172.63" r="0.9"/><circle cx="293.85" cy="260.91" r="0.9"/><circle cx="591.79" cy="208.37" r="0.9"/><circle cx="294.23" cy="265.25" r="0.9"/><circle cx="642.77" cy="265.25" r="0.9"/><circle cx="293.85" cy="269.59" r="0.9"/><circle cx="670.48" cy="336" r="0.9"/><circle cx="342.25" cy="191.53" r="0.9"/><circle cx="368.15" cy="176.58" r="0.9"/><circle cx="344.09" cy="195.48" r="0.9"/><circle cx="445.01" cy="158.75" r="0.9"/><circle cx="345.21" cy="199.69" r="0.9"/><circle cx="522.58" cy="168.42" r="0.9"/><circle cx="345.59" cy="204.03" r="0.9"/><circle cx="591.41" cy="204.03" r="0.9"/><circle cx="345.21" cy="208.37" r="0.9"/><circle cx="643.15" cy="260.91" r="0.9"/><circle cx="344.09" cy="212.58" r="0.9"/><circle cx="671.61" cy="331.79" r="0.9"/><circle cx="414.42" cy="159.74" r="0.9"/><circle cx="443.88" cy="154.54" r="0.9"/><circle cx="414.8" cy="164.08" r="0.9"/><circle cx="522.2" cy="164.08" r="0.9"/><circle cx="414.42" cy="168.42" r="0.9"/><circle cx="591.79" cy="199.69" r="0.9"/><circle cx="413.29" cy="172.63" r="0.9"/><circle cx="644.28" cy="256.7" r="0.9"/><circle cx="411.45" cy="176.58" r="0.9"/><circle cx="673.45" cy="327.84" r="0.9"/><circle cx="493.12" cy="154.54" r="0.9"/><circle cx="522.58" cy="159.74" r="0.9"/><circle cx="491.99" cy="158.75" r="0.9"/><circle cx="592.91" cy="195.48" r="0.9"/><circle cx="490.15" cy="162.7" r="0.9"/><circle cx="646.12" cy="252.75" r="0.9"/><circle cx="487.65" cy="166.27" r="0.9"/><circle cx="675.95" cy="324.27" r="0.9"/><circle cx="568.85" cy="176.58" r="0.9"/><circle cx="594.75" cy="191.53" r="0.9"/><circle cx="566.35" cy="180.15" r="0.9"/><circle cx="648.62" cy="249.18" r="0.9"/><circle cx="563.27" cy="183.23" r="0.9"/><circle cx="679.03" cy="321.19" r="0.9"/><circle cx="632.48" cy="223.18" r="0.9"/><circle cx="651.7" cy="246.1" r="0.9"/><circle cx="628.91" cy="225.68" r="0.9"/><circle cx="682.6" cy="318.69" r="0.9"/><circle cx="676.32" cy="288.74" r="0.9"/><circle cx="686.55" cy="316.85" r="0.9"/></g>
</g>
<circle cx="695.1" cy="420.26" r="25.2" fill="#008000"/>
<circle cx="667.77" cy="495.35" r="25.2" fill="#008000"/>
<circle cx="616.41" cy="556.57" r="25.2" fill="#008000"/>
<circle cx="547.2" cy="596.52" r="25.2" fill="#008000"/>
<circle cx="468.5" cy="610.4" r="25.2" fill="#008000"/>
<circle cx="389.8" cy="596.52" r="25.2" fill="#008000"/>
<circle cx="320.59" cy="556.57" r="25.2" fill="#008000"/>
<circle cx="269.23" cy="495.35" r="25.2" fill="#008000"/>
<circle cx="241.9" cy="420.26" r="25.2" fill="#008000"/>
<circle cx="241.9" cy="340.34" r="25.2" fill="#008000"/>
<circle cx="269.23" cy="265.25" r="25.2" fill="#008000"/>
<circle cx="320.59" cy="204.03" r="25.2" fill="#008000"/>
<circle cx="389.8" cy="164.08" r="25.2" fill="#008000"/>
<circle cx="468.5" cy="150.2" r="25.2" fill="#008000"/>
<circle cx="547.2" cy="164.08" r="25.2" fill="#008000"/>
<circle cx="616.41" cy="204.03" r="25.2" fill="#008000"/>
<circle cx="667.77" cy="265.25" r="25.2" fill="#008000"/>
<circle cx="695.1" cy="340.34" r="25.2" fill="#008000"/>
<clipPath id="c0"><rect x="680.8" y="411" width="31.2" height="17.6" rx="5.5"/></clipPath>
<g clip-path="url(#c0)" fill="#fff">
<rect x="680.8" y="411" width="10.6" height="9" fill-opacity="0.1"/>
<rect x="691.2" y="411" width="10.6" height="9" fill-opacity="0.14"/>
<rect x="701.6" y="411" width="10.6" height="9" fill-opacity="0.12"/>
<rect x="680.8" y="419.8" width="10.6" height="9" fill-opacity="0.16"/>
<rect x="691.2" y="419.8" width="10.6" height="9" fill-opacity="0.2"/>
<rect x="701.6" y="419.8" width="10.6" height="9" fill-opacity="0.14"/>
</g>
<clipPath id="c1"><rect x="650.6" y="487.3" width="32.7" height="15.9" rx="5.5"/></clipPath>
<g clip-path="url(#c1)" fill="#fff">
<rect x="650.6" y="487.3" width="11.1" height="8.15" fill-opacity="0.14"/>
<rect x="661.5" y="487.3" width="11.1" height="8.15" fill-opacity="0.2"/>
<rect x="672.4" y="487.3" width="11.1" height="8.15" fill-opacity="0.18"/>
<rect x="650.6" y="495.25" width="11.1" height="8.15" fill-opacity="0.22"/>
<rect x="661.5" y="495.25" width="11.1" height="8.15" fill-opacity="0.26"/>
<rect x="672.4" y="495.25" width="11.1" height="8.15" fill-opacity="0.2"/>
</g>
<clipPath id="c2"><rect x="600" y="547.3" width="33.3" height="19.4" rx="5.5"/></clipPath>
<g clip-path="url(#c2)" fill="#fff">
<rect x="600" y="547.3" width="11.3" height="9.9" fill-opacity="0.08"/>
<rect x="611.1" y="547.3" width="11.3" height="9.9" fill-opacity="0.12"/>
<rect x="622.2" y="547.3" width="11.3" height="9.9" fill-opacity="0.14"/>
<rect x="600" y="557" width="11.3" height="9.9" fill-opacity="0.12"/>
<rect x="611.1" y="557" width="11.3" height="9.9" fill-opacity="0.14"/>
<rect x="622.2" y="557" width="11.3" height="9.9" fill-opacity="0.1"/>
</g>
<clipPath id="c3"><rect x="528.3" y="588.3" width="35" height="13.4" rx="5.5"/></clipPath>
<g clip-path="url(#c3)" fill="#fff">
<rect x="528.3" y="588.3" width="8.95" height="13.6" fill-opacity="0.2"/>
<rect x="537.05" y="588.3" width="8.95" height="13.6" fill-opacity="0.3"/>
<rect x="545.8" y="588.3" width="8.95" height="13.6" fill-opacity="0.26"/>
<rect x="554.55" y="588.3" width="8.95" height="13.6" fill-opacity="0.22"/>
</g>
<clipPath id="c4"><rect x="446.7" y="601.7" width="45" height="16.6" rx="5.5"/></clipPath>
<g clip-path="url(#c4)" fill="#fff">
<rect x="446.7" y="601.7" width="11.45" height="8.5" fill-opacity="0.12"/>
<rect x="457.95" y="601.7" width="11.45" height="8.5" fill-opacity="0.16"/>
<rect x="469.2" y="601.7" width="11.45" height="8.5" fill-opacity="0.16"/>
<rect x="480.45" y="601.7" width="11.45" height="8.5" fill-opacity="0.14"/>
<rect x="446.7" y="610" width="11.45" height="8.5" fill-opacity="0.18"/>
<rect x="457.95" y="610" width="11.45" height="8.5" fill-opacity="0.22"/>
<rect x="469.2" y="610" width="11.45" height="8.5" fill-opacity="0.2"/>
<rect x="480.45" y="610" width="11.45" height="8.5" fill-opacity="0.15"/>
</g>
<clipPath id="c5"><rect x="365" y="588.3" width="43.3" height="12.4" rx="5.5"/></clipPath>
<g clip-path="url(#c5)" fill="#fff">
<rect x="365" y="588.3" width="8.86" height="12.6" fill-opacity="0.5"/>
<rect x="373.66" y="588.3" width="8.86" height="12.6" fill-opacity="0.25"/>
<rect x="382.32" y="588.3" width="8.86" height="12.6" fill-opacity="0.4"/>
<rect x="390.98" y="588.3" width="8.86" height="12.6" fill-opacity="0.32"/>
<rect x="399.64" y="588.3" width="8.86" height="12.6" fill-opacity="0.3"/>
</g>
<clipPath id="c6"><rect x="303.3" y="547.3" width="36.7" height="16" rx="5.5"/></clipPath>
<g clip-path="url(#c6)" fill="#fff">
<rect x="303.3" y="547.3" width="9.37" height="8.2" fill-opacity="0.16"/>
<rect x="312.48" y="547.3" width="9.37" height="8.2" fill-opacity="0.22"/>
<rect x="321.65" y="547.3" width="9.37" height="8.2" fill-opacity="0.2"/>
<rect x="330.82" y="547.3" width="9.37" height="8.2" fill-opacity="0.2"/>
<rect x="303.3" y="555.3" width="9.37" height="8.2" fill-opacity="0.26"/>
<rect x="312.48" y="555.3" width="9.37" height="8.2" fill-opacity="0.22"/>
<rect x="321.65" y="555.3" width="9.37" height="8.2" fill-opacity="0.24"/>
<rect x="330.82" y="555.3" width="9.37" height="8.2" fill-opacity="0.18"/>
</g>
<clipPath id="c7"><rect x="252.5" y="486.2" width="31" height="18.6" rx="5.5"/></clipPath>
<g clip-path="url(#c7)" fill="#fff">
<rect x="252.5" y="486.2" width="10.53" height="9.5" fill-opacity="0.12"/>
<rect x="262.83" y="486.2" width="10.53" height="9.5" fill-opacity="0.16"/>
<rect x="273.17" y="486.2" width="10.53" height="9.5" fill-opacity="0.2"/>
<rect x="252.5" y="495.5" width="10.53" height="9.5" fill-opacity="0.2"/>
<rect x="262.83" y="495.5" width="10.53" height="9.5" fill-opacity="0.26"/>
<rect x="273.17" y="495.5" width="10.53" height="9.5" fill-opacity="0.22"/>
</g>
<clipPath id="c8"><rect x="222.4" y="409.8" width="36.3" height="18.5" rx="5.5"/></clipPath>
<g clip-path="url(#c8)" fill="#fff">
<rect x="222.4" y="409.8" width="9.27" height="9.45" fill-opacity="0.12"/>
<rect x="231.47" y="409.8" width="9.27" height="9.45" fill-opacity="0.16"/>
<rect x="240.55" y="409.8" width="9.27" height="9.45" fill-opacity="0.14"/>
<rect x="249.62" y="409.8" width="9.27" height="9.45" fill-opacity="0.1"/>
<rect x="222.4" y="419.05" width="9.27" height="9.45" fill-opacity="0.2"/>
<rect x="231.47" y="419.05" width="9.27" height="9.45" fill-opacity="0.26"/>
<rect x="240.55" y="419.05" width="9.27" height="9.45" fill-opacity="0.22"/>
<rect x="249.62" y="419.05" width="9.27" height="9.45" fill-opacity="0.16"/>
</g>
<clipPath id="c9"><rect x="221.5" y="335.4" width="37.2" height="11.1" rx="5.5"/></clipPath>
<g clip-path="url(#c9)" fill="#fff">
<rect x="221.5" y="335.4" width="9.5" height="11.3" fill-opacity="0.25"/>
<rect x="230.8" y="335.4" width="9.5" height="11.3" fill-opacity="0.4"/>
<rect x="240.1" y="335.4" width="9.5" height="11.3" fill-opacity="0.3"/>
<rect x="249.4" y="335.4" width="9.5" height="11.3" fill-opacity="0.2"/>
</g>
<clipPath id="c10"><rect x="250.5" y="256.9" width="35.1" height="16.5" rx="5.5"/></clipPath>
<g clip-path="url(#c10)" fill="#fff">
<rect x="250.5" y="256.9" width="8.98" height="8.45" fill-opacity="0.1"/>
<rect x="259.27" y="256.9" width="8.98" height="8.45" fill-opacity="0.16"/>
<rect x="268.05" y="256.9" width="8.98" height="8.45" fill-opacity="0.14"/>
<rect x="276.83" y="256.9" width="8.98" height="8.45" fill-opacity="0.1"/>
<rect x="250.5" y="265.15" width="8.98" height="8.45" fill-opacity="0.28"/>
<rect x="259.27" y="265.15" width="8.98" height="8.45" fill-opacity="0.42"/>
<rect x="268.05" y="265.15" width="8.98" height="8.45" fill-opacity="0.36"/>
<rect x="276.83" y="265.15" width="8.98" height="8.45" fill-opacity="0.26"/>
</g>
<clipPath id="c11"><rect x="303" y="199" width="35" height="11" rx="5.5"/></clipPath>
<g clip-path="url(#c11)" fill="#fff">
<rect x="303" y="199" width="8.95" height="11.2" fill-opacity="0.2"/>
<rect x="311.75" y="199" width="8.95" height="11.2" fill-opacity="0.33"/>
<rect x="320.5" y="199" width="8.95" height="11.2" fill-opacity="0.4"/>
<rect x="329.25" y="199" width="8.95" height="11.2" fill-opacity="0.3"/>
</g>
<clipPath id="c12"><rect x="371.2" y="157.7" width="36.7" height="11.2" rx="5.5"/></clipPath>
<g clip-path="url(#c12)" fill="#fff">
<rect x="371.2" y="157.7" width="9.37" height="11.4" fill-opacity="0.15"/>
<rect x="380.38" y="157.7" width="9.37" height="11.4" fill-opacity="0.42"/>
<rect x="389.55" y="157.7" width="9.37" height="11.4" fill-opacity="0.35"/>
<rect x="398.72" y="157.7" width="9.37" height="11.4" fill-opacity="0.3"/>
</g>
<clipPath id="c13"><rect x="448" y="140.4" width="37.3" height="16.3" rx="5.5"/></clipPath>
<g clip-path="url(#c13)" fill="#fff">
<rect x="448" y="140.4" width="9.53" height="8.35" fill-opacity="0.08"/>
<rect x="457.32" y="140.4" width="9.53" height="8.35" fill-opacity="0.1"/>
<rect x="466.65" y="140.4" width="9.53" height="8.35" fill-opacity="0.1"/>
<rect x="475.98" y="140.4" width="9.53" height="8.35" fill-opacity="0.08"/>
<rect x="448" y="148.55" width="9.53" height="8.35" fill-opacity="0.26"/>
<rect x="457.32" y="148.55" width="9.53" height="8.35" fill-opacity="0.32"/>
<rect x="466.65" y="148.55" width="9.53" height="8.35" fill-opacity="0.3"/>
<rect x="475.98" y="148.55" width="9.53" height="8.35" fill-opacity="0.3"/>
</g>
<clipPath id="c14"><rect x="530" y="157.7" width="34.7" height="11.2" rx="5.5"/></clipPath>
<g clip-path="url(#c14)" fill="#fff">
<rect x="530" y="157.7" width="8.88" height="11.4" fill-opacity="0.2"/>
<rect x="538.67" y="157.7" width="8.88" height="11.4" fill-opacity="0.4"/>
<rect x="547.35" y="157.7" width="8.88" height="11.4" fill-opacity="0.3"/>
<rect x="556.03" y="157.7" width="8.88" height="11.4" fill-opacity="0.15"/>
</g>
<clipPath id="c15"><rect x="599" y="199.8" width="42" height="10.3" rx="5.15"/></clipPath>
<g clip-path="url(#c15)" fill="#fff">
<rect x="599" y="199.8" width="10.7" height="10.5" fill-opacity="0.33"/>
<rect x="609.5" y="199.8" width="10.7" height="10.5" fill-opacity="0.36"/>
<rect x="620" y="199.8" width="10.7" height="10.5" fill-opacity="0.28"/>
<rect x="630.5" y="199.8" width="10.7" height="10.5" fill-opacity="0.07"/>
</g>
<clipPath id="c16"><rect x="646.3" y="257.5" width="37.5" height="15.5" rx="5.5"/></clipPath>
<g clip-path="url(#c16)" fill="#fff">
<rect x="646.3" y="257.5" width="9.57" height="7.95" fill-opacity="0.05"/>
<rect x="655.67" y="257.5" width="9.57" height="7.95" fill-opacity="0.07"/>
<rect x="665.05" y="257.5" width="9.57" height="7.95" fill-opacity="0.08"/>
<rect x="674.42" y="257.5" width="9.57" height="7.95" fill-opacity="0.07"/>
<rect x="646.3" y="265.25" width="9.57" height="7.95" fill-opacity="0.08"/>
<rect x="655.67" y="265.25" width="9.57" height="7.95" fill-opacity="0.3"/>
<rect x="665.05" y="265.25" width="9.57" height="7.95" fill-opacity="0.22"/>
<rect x="674.42" y="265.25" width="9.57" height="7.95" fill-opacity="0.2"/>
</g>
<clipPath id="c17"><rect x="679.8" y="335.6" width="32.2" height="10.4" rx="5.2"/></clipPath>
<g clip-path="url(#c17)" fill="#fff">
<rect x="679.8" y="335.6" width="10.93" height="10.6" fill-opacity="0.35"/>
<rect x="690.53" y="335.6" width="10.93" height="10.6" fill-opacity="0.3"/>
<rect x="701.27" y="335.6" width="10.93" height="10.6" fill-opacity="0.2"/>
</g>
</svg>
<div class="btn"><svg viewBox="0 0 1792 1792"><path d="M1024 1375v-190q0-14-9.500-23.500t-22.500-9.500h-192q-13 0-22.500 9.500t-9.500 23.500v190q0 14 9.500 23.500t22.500 9.500h192q13 0 22.500-9.500t9.500-23.500zm-2-374l18-459q0-12-10-19-13-11-24-11h-220q-11 0-24 11-10 7-10 21l17 457q0 10 10 16.500t24 6.500h185q14 0 23.500-6.500t10.500-16.500zm-14-934l768 1408q35 63-2 126-17 29-46.500 46t-63.500 17h-1536q-34 0-63.500-17t-46.500-46q-37-63-2-126l768-1408q17-31 47-49t65-18 65 18 47 49z"/></svg>查看报警记录</div>
<div class="panel"><div class="hd"><svg viewBox="0 0 1792 1792"><path d="M512 1248v192q0 40-28 68t-68 28h-320q-40 0-68-28t-28-68v-192q0-40 28-68t68-28h320q40 0 68 28t28 68zm0-512v192q0 40-28 68t-68 28h-320q-40 0-68-28t-28-68v-192q0-40 28-68t68-28h320q40 0 68 28t28 68zm1280 512v192q0 40-28 68t-68 28h-960q-40 0-68-28t-28-68v-192q0-40 28-68t68-28h960q40 0 68 28t28 68zm-1280-1024v192q0 40-28 68t-68 28h-320q-40 0-68-28t-28-68v-192q0-40 28-68t68-28h320q40 0 68 28t28 68zm1280 512v192q0 40-28 68t-68 28h-960q-40 0-68-28t-28-68v-192q0-40 28-68t68-28h960q40 0 68 28t28 68zm0-512v192q0 40-28 68t-68 28h-960q-40 0-68-28t-28-68v-192q0-40 28-68t68-28h960q40 0 68 28t28 68z"/></svg><span>拓扑列表</span></div>
<ul>
<li><span class="blur" style="top:4.5px;height:17px;border-radius:8px"><i style="left:0px;top:0px;height:17.3px;background:#e0e0e0"></i><i style="left:10.4px;top:0px;height:17.3px;background:#dedede"></i><i style="left:20.8px;top:0px;height:17.3px;background:#d8d8d8"></i><i style="left:31.2px;top:0px;height:17.3px;background:#ebebeb"></i></span></li>
<li><span class="blur" style="top:3.5px;height:14.5px;border-radius:7.25px"><i style="left:0px;top:0px;height:6.3px;background:#f6f6f6"></i><i style="left:10.4px;top:0px;height:6.3px;background:#f7f7f7"></i><i style="left:20.8px;top:0px;height:6.3px;background:#f6f6f6"></i><i style="left:31.2px;top:0px;height:6.3px;background:#fafafa"></i><i style="left:0px;top:6px;height:8.8px;background:#a8a8a8"></i><i style="left:10.4px;top:6px;height:8.8px;background:#c4c4c4"></i><i style="left:20.8px;top:6px;height:8.8px;background:#b4b4b4"></i><i style="left:31.2px;top:6px;height:8.8px;background:#e9e9e9"></i></span></li>
<li><span class="blur" style="top:3.6px;height:14.5px;border-radius:7.25px"><i style="left:0px;top:0px;height:11.3px;background:#dcdcdc"></i><i style="left:10.4px;top:0px;height:11.3px;background:#dcdcdc"></i><i style="left:20.8px;top:0px;height:11.3px;background:#e6e6e6"></i><i style="left:31.2px;top:0px;height:11.3px;background:#eeeeee"></i><i style="left:0px;top:11px;height:3.8px;background:#e8e8e8"></i><i style="left:10.4px;top:11px;height:3.8px;background:#e8e8e8"></i><i style="left:20.8px;top:11px;height:3.8px;background:#ececec"></i><i style="left:31.2px;top:11px;height:3.8px;background:#f4f4f4"></i></span></li>
<li><span class="blur" style="top:2px;height:18px;border-radius:8px"><i style="left:0px;top:0px;height:8.3px;background:#efefef"></i><i style="left:10.4px;top:0px;height:8.3px;background:#f0f0f0"></i><i style="left:20.8px;top:0px;height:8.3px;background:#f2f2f2"></i><i style="left:31.2px;top:0px;height:8.3px;background:#f6f6f6"></i><i style="left:0px;top:8px;height:10.3px;background:#c8c8c8"></i><i style="left:10.4px;top:8px;height:10.3px;background:#d4d4d4"></i><i style="left:20.8px;top:8px;height:10.3px;background:#d2d2d2"></i><i style="left:31.2px;top:8px;height:10.3px;background:#eaeaea"></i></span></li>
<li><span class="blur" style="top:5.6px;height:11px;border-radius:5.5px"><i style="left:0px;top:0px;height:11.3px;background:#d9d9d9"></i><i style="left:10.4px;top:0px;height:11.3px;background:#c5c5c5"></i><i style="left:20.8px;top:0px;height:11.3px;background:#d7d7d7"></i><i style="left:31.2px;top:0px;height:11.3px;background:#e7e7e7"></i></span></li>
<li><span class="blur" style="top:3px;height:17px;border-radius:8px"><i style="left:0px;top:0px;height:9.3px;background:#d0d0d0"></i><i style="left:10.4px;top:0px;height:9.3px;background:#e0e0e0"></i><i style="left:20.8px;top:0px;height:9.3px;background:#dedede"></i><i style="left:31.2px;top:0px;height:9.3px;background:#f2f2f2"></i><i style="left:0px;top:9px;height:8.3px;background:#d6d6d6"></i><i style="left:10.4px;top:9px;height:8.3px;background:#e2e2e2"></i><i style="left:20.8px;top:9px;height:8.3px;background:#d8d8d8"></i><i style="left:31.2px;top:9px;height:8.3px;background:#f3f3f3"></i></span></li>
<li><span class="blur" style="top:7px;height:11px;border-radius:5.5px"><i style="left:0px;top:0px;height:11.3px;background:#a8a8a8"></i><i style="left:10.4px;top:0px;height:11.3px;background:#c0c0c0"></i><i style="left:20.8px;top:0px;height:11.3px;background:#b0b0b0"></i><i style="left:31.2px;top:0px;height:11.3px;background:#eaeaea"></i></span></li>
<li><span class="blur" style="top:5px;height:14px;border-radius:7px"><i style="left:0px;top:0px;height:8.3px;background:#e4e4e4"></i><i style="left:10.4px;top:0px;height:8.3px;background:#d0d0d0"></i><i style="left:20.8px;top:0px;height:8.3px;background:#e4e4e4"></i><i style="left:31.2px;top:0px;height:8.3px;background:#f8f8f8"></i><i style="left:0px;top:8px;height:6.3px;background:#ececec"></i><i style="left:10.4px;top:8px;height:6.3px;background:#dcdcdc"></i><i style="left:20.8px;top:8px;height:6.3px;background:#f0f0f0"></i><i style="left:31.2px;top:8px;height:6.3px;background:#f8f8f8"></i></span></li>
<li><span class="blur" style="top:3px;height:16px;border-radius:8px"><i style="left:0px;top:0px;height:8.3px;background:#e0e0e0"></i><i style="left:10.4px;top:0px;height:8.3px;background:#e4e4e4"></i><i style="left:20.8px;top:0px;height:8.3px;background:#e4e4e4"></i><i style="left:31.2px;top:0px;height:8.3px;background:#f4f4f4"></i><i style="left:0px;top:8px;height:8.3px;background:#b8b8b8"></i><i style="left:10.4px;top:8px;height:8.3px;background:#d0d0d0"></i><i style="left:20.8px;top:8px;height:8.3px;background:#c0c0c0"></i><i style="left:31.2px;top:8px;height:8.3px;background:#f0f0f0"></i></span></li>
<li><span class="blur" style="top:7px;height:11px;border-radius:5.5px"><i style="left:0px;top:0px;height:11.3px;background:#a8a8a8"></i><i style="left:10.4px;top:0px;height:11.3px;background:#c4c4c4"></i><i style="left:20.8px;top:0px;height:11.3px;background:#e4e4e4"></i><i style="left:31.2px;top:0px;height:11.3px;background:#ededed"></i></span></li>
<li><span class="blur" style="top:4px;height:17px;border-radius:8px"><i style="left:0px;top:0px;height:9.3px;background:#dcdcdc"></i><i style="left:10.4px;top:0px;height:9.3px;background:#d0d0d0"></i><i style="left:20.8px;top:0px;height:9.3px;background:#d4d4d4"></i><i style="left:31.2px;top:0px;height:9.3px;background:#d8d8d8"></i><i style="left:0px;top:9px;height:8.3px;background:#e2e2e2"></i><i style="left:10.4px;top:9px;height:8.3px;background:#d6d6d6"></i><i style="left:20.8px;top:9px;height:8.3px;background:#dadada"></i><i style="left:31.2px;top:9px;height:8.3px;background:#dcdcdc"></i></span></li>
<li><span class="blur" style="top:3px;height:17px;border-radius:8px"><i style="left:0px;top:0px;height:7.3px;background:#f6f6f6"></i><i style="left:10.4px;top:0px;height:7.3px;background:#f4f4f4"></i><i style="left:20.8px;top:0px;height:7.3px;background:#f0f0f0"></i><i style="left:31.2px;top:0px;height:7.3px;background:#f2f2f2"></i><i style="left:0px;top:7px;height:10.3px;background:#d0d0d0"></i><i style="left:10.4px;top:7px;height:10.3px;background:#c4c4c4"></i><i style="left:20.8px;top:7px;height:10.3px;background:#c4c4c4"></i><i style="left:31.2px;top:7px;height:10.3px;background:#c4c4c4"></i></span></li>
<li><span class="blur" style="top:6px;height:11px;border-radius:5.5px"><i style="left:0px;top:0px;height:11.3px;background:#d0d0d0"></i><i style="left:10.4px;top:0px;height:11.3px;background:#a8a8a8"></i><i style="left:20.8px;top:0px;height:11.3px;background:#b8b8b8"></i><i style="left:31.2px;top:0px;height:11.3px;background:#d0d0d0"></i></span></li>
<li><span class="blur" style="top:3px;height:18px;border-radius:8px"><i style="left:0px;top:0px;height:9.3px;background:#e8e8e8"></i><i style="left:10.4px;top:0px;height:9.3px;background:#dcdcdc"></i><i style="left:20.8px;top:0px;height:9.3px;background:#dedede"></i><i style="left:31.2px;top:0px;height:9.3px;background:#e0e0e0"></i><i style="left:0px;top:9px;height:9.3px;background:#e0e0e0"></i><i style="left:10.4px;top:9px;height:9.3px;background:#d8d8d8"></i><i style="left:20.8px;top:9px;height:9.3px;background:#c8c8c8"></i><i style="left:31.2px;top:9px;height:9.3px;background:#e4e4e4"></i></span></li>
<li><span class="blur" style="top:7px;height:11px;border-radius:5.5px"><i style="left:0px;top:0px;height:11.3px;background:#b4b4b4"></i><i style="left:10.4px;top:0px;height:11.3px;background:#a8a8a8"></i><i style="left:20.8px;top:0px;height:11.3px;background:#c4c4c4"></i><i style="left:31.2px;top:0px;height:11.3px;background:#e2e2e2"></i></span></li>
<li><span class="blur" style="top:3px;height:17px;border-radius:8px"><i style="left:0px;top:0px;height:10.3px;background:#c8c8c8"></i><i style="left:10.4px;top:0px;height:10.3px;background:#d0d0d0"></i><i style="left:20.8px;top:0px;height:10.3px;background:#e4e4e4"></i><i style="left:31.2px;top:0px;height:10.3px;background:#f4f4f4"></i><i style="left:0px;top:10px;height:7.3px;background:#eeeeee"></i><i style="left:10.4px;top:10px;height:7.3px;background:#f0f0f0"></i><i style="left:20.8px;top:10px;height:7.3px;background:#f4f4f4"></i><i style="left:31.2px;top:10px;height:7.3px;background:#fafafa"></i></span></li>
<li><span class="blur" style="top:2px;height:19px;border-radius:8px"><i style="left:0px;top:0px;height:9.3px;background:#e6e6e6"></i><i style="left:10.4px;top:0px;height:9.3px;background:#eaeaea"></i><i style="left:20.8px;top:0px;height:9.3px;background:#eaeaea"></i><i style="left:31.2px;top:0px;height:9.3px;background:#efefef"></i><i style="left:0px;top:9px;height:10.3px;background:#b0b0b0"></i><i style="left:10.4px;top:9px;height:10.3px;background:#d0d0d0"></i><i style="left:20.8px;top:9px;height:10.3px;background:#d4d4d4"></i><i style="left:31.2px;top:9px;height:10.3px;background:#ececec"></i></span></li>
<li><span class="blur" style="top:6px;height:11px;border-radius:5.5px"><i style="left:0px;top:0px;height:11.3px;background:#a0a0a0"></i><i style="left:10.4px;top:0px;height:11.3px;background:#c4c4c4"></i><i style="left:20.8px;top:0px;height:11.3px;background:#d0d0d0"></i><i style="left:31.2px;top:0px;height:11.3px;background:#e9e9e9"></i></span></li>
</ul></div>
<div class="footer"><div class="l">© 2017 - 2020 SmartPing.org</div><div class="r">Version: 0.8.0</div></div>
</body>
</html>
